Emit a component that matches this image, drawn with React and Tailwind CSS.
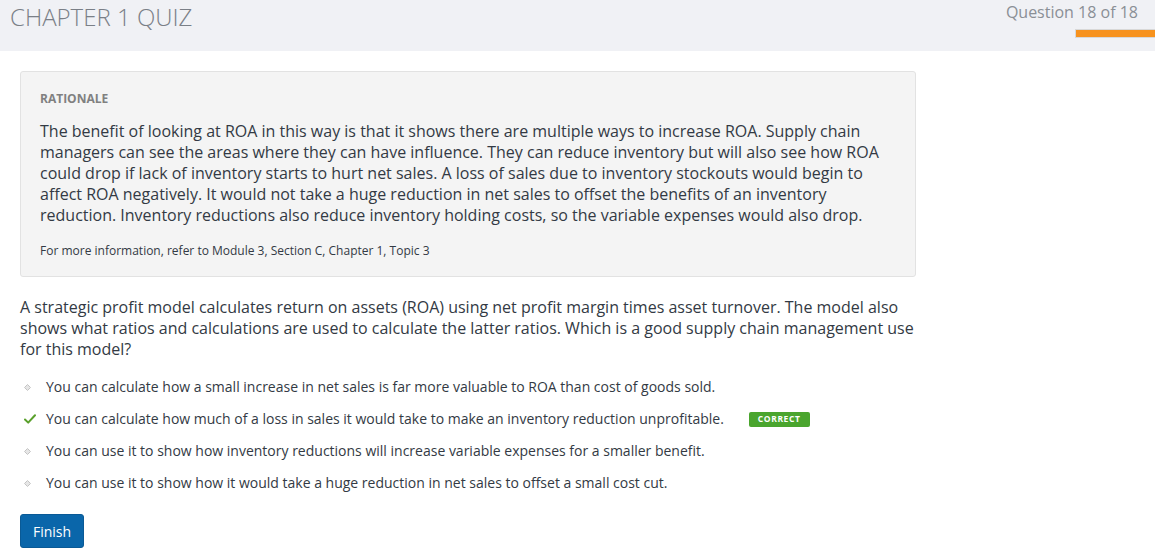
import React from "react";

const font = { fontFamily: '"Open Sans", "Noto Sans", sans-serif' };

function Bullet() {
  return (
    <svg width="7" height="7" viewBox="0 0 7 7" className="shrink-0">
      <path d="M3.5 0.5 L6.5 3.5 L3.5 6.5 L0.5 3.5 Z" fill="#e6e6e6" stroke="#c4c4c4" strokeWidth="1" />
    </svg>
  );
}

function Check() {
  return (
    <svg width="12" height="10" viewBox="0 0 12 10" className="shrink-0">
      <path d="M1 5.5 L4.2 8.6 L11 1.2" fill="none" stroke="#5aa02c" strokeWidth="2" strokeLinecap="round" strokeLinejoin="round" />
    </svg>
  );
}

const options = [
  { text: "You can calculate how a small increase in net sales is far more valuable to ROA than cost of goods sold.", correct: false },
  { text: "You can calculate how much of a loss in sales it would take to make an inventory reduction unprofitable.", correct: true },
  { text: "You can use it to show how inventory reductions will increase variable expenses for a smaller benefit.", correct: false },
  { text: "You can use it to show how it would take a huge reduction in net sales to offset a small cost cut.", correct: false },
];

export default function App() {
  return (
    <div className="w-[1155px] h-[560px] bg-white overflow-hidden" style={font}>
      <div className="h-[51px] bg-[#f0f1f5] flex justify-between">
        <div className="pl-[10px] pt-[1px] text-[24px] font-light text-[#7a7f87] leading-[32px]">CHAPTER 1 QUIZ</div>
        <div className="flex flex-col items-end">
          <div className="pr-[17px] pt-[1px] text-[16px] leading-[22px] text-[#8a8f96]">Question 18 of 18</div>
          <div className="mt-[6px] w-[80px] h-[9px] bg-[#f7921e] border border-[#d8d8d8] border-r-0"></div>
        </div>
      </div>

      <div className="px-[20px] pt-[20px]">
        <div className="w-[896px] bg-[#f4f4f4] border border-[#e2e2e2] rounded-[3px] px-[19px] pt-[19px] pb-[17px]">
          <div className="text-[12px] font-bold text-[#808080] leading-[16px]">RATIONALE</div>
          <p className="mt-[14px] text-[16px] leading-[21px] text-[#333a44] pr-[10px]">
            The benefit of looking at ROA in this way is that it shows there are multiple ways to increase ROA. Supply chain managers can see the areas where they can have influence. They can reduce inventory but will also see how ROA could drop if lack of inventory starts to hurt net sales. A loss of sales due to inventory stockouts would begin to affect ROA negatively. It would not take a huge reduction in net sales to offset the benefits of an inventory reduction. Inventory reductions also reduce inventory holding costs, so the variable expenses would also drop.
          </p>
          <div className="mt-[17px] text-[12px] leading-[16px] text-[#333a44]">For more information, refer to Module 3, Section C, Chapter 1, Topic 3</div>
        </div>

        <p className="mt-[20px] w-[900px] text-[16px] leading-[21px] text-[#333a44]">
          A strategic profit model calculates return on assets (ROA) using net profit margin times asset turnover. The model also shows what ratios and calculations are used to calculate the latter ratios. Which is a good supply chain management use for this model?
        </p>

        <ul className="mt-[18px] flex flex-col gap-[14px]">
          {options.map((o, i) => (
            <li key={i} className="flex items-center h-[18px]">
              <div className="w-[26px] flex justify-start pl-[4px]">{o.correct ? <Check /> : <Bullet />}</div>
              <span className="text-[14px] leading-[18px] text-[#333a44]">{o.text}</span>
              {o.correct && (
                <span className="ml-[25px] bg-[#4aa52e] text-white text-[8.5px] font-bold tracking-[0.6px] rounded-[2px] h-[15px] px-[9px] flex items-center">CORRECT</span>
              )}
            </li>
          ))}
        </ul>

        <button className="mt-[22px] w-[64px] h-[34px] bg-[#0a66aa] border border-[#0a5a96] rounded-[3px] text-white text-[14px]">Finish</button>
      </div>
    </div>
  );
}
